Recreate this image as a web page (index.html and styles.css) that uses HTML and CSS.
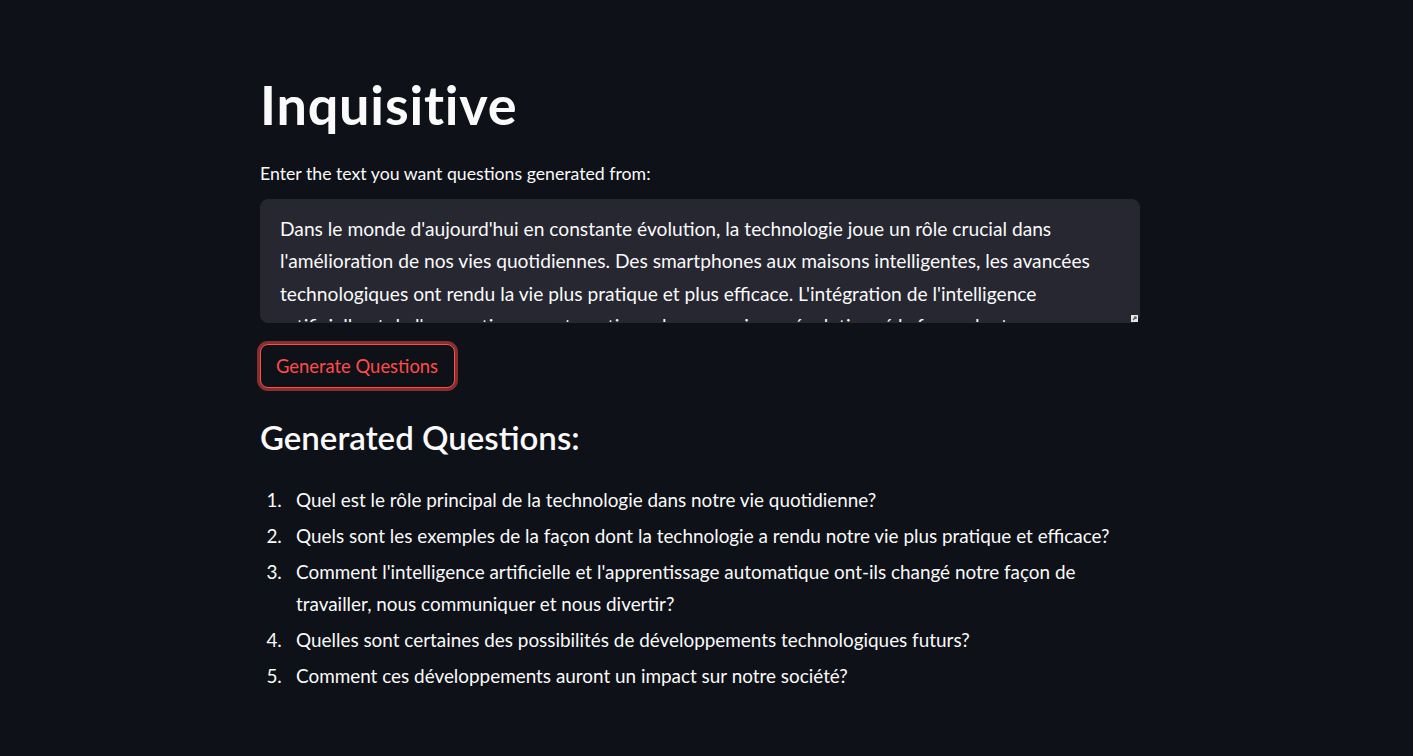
FILE: index.html
```html
<!DOCTYPE html>
<html lang="fr">
<head>
<meta charset="utf-8">
<title>Inquisitive</title>
<link rel="stylesheet" href="styles.css">
</head>
<body>
<div class="app">
  <main class="block">
    <h1 class="title">Inquisitive</h1>
    <label class="field-label" for="source">Enter the text you want questions generated from:</label>
    <div class="textarea-wrap">
      <textarea id="source" class="textarea">Dans le monde d'aujourd'hui en constante évolution, la technologie joue un rôle crucial dans l'amélioration de nos vies quotidiennes. Des smartphones aux maisons intelligentes, les avancées technologiques ont rendu la vie plus pratique et plus efficace. L'intégration de l'intelligence artificielle et de l'apprentissage automatique dans nos vies a révolutionné la façon dont nous travaillons, communiquons et nous divertissons. À l'avenir, de nombreuses possibilités de développements technologiques s'offrent à nous, et ces développements auront un impact important sur notre société.</textarea>
      <span class="resizer" aria-hidden="true"><svg viewBox="0 0 7 7" width="7" height="7"><path d="M2 5 L5 2 M3 2 H5 V4" fill="none" stroke="#555" stroke-width="1.2"/></svg></span>
    </div>
    <button class="btn" type="button">Generate Questions</button>
    <h3 class="subhead">Generated Questions:</h3>
    <ol class="questions">
      <li>Quel est le rôle principal de la technologie dans notre vie quotidienne?</li>
      <li>Quels sont les exemples de la façon dont la technologie a rendu notre vie plus pratique et efficace?</li>
      <li>Comment l'intelligence artificielle et l'apprentissage automatique ont-ils changé notre façon de travailler, nous communiquer et nous divertir?</li>
      <li>Quelles sont certaines des possibilités de développements technologiques futurs?</li>
      <li>Comment ces développements auront un impact sur notre société?</li>
    </ol>
  </main>
</div>
</body>
</html>
```
FILE: styles.css
```css
html, body {
  margin: 0;
  padding: 0;
  background: #0e1117;
}

body {
  color: #fafafa;
  font-family: "Lato", "Liberation Sans", sans-serif;
  overflow: hidden;
}

.app {
  padding-right: 13px;
  min-height: 756px;
}

.block {
  max-width: 880px;
  margin: 0 auto;
  padding-top: 73px;
  display: flex;
  flex-direction: column;
  align-items: flex-start;
}

.title {
  margin: 0;
  font-size: 54px;
  line-height: 64.8px;
  font-weight: 700;
  letter-spacing: 0.8px;
  color: #fafafa;
}

.field-label {
  margin-top: 22.6px;
  font-size: 17.7px;
  line-height: 28px;
  font-weight: 400;
  color: #fafafa;
}

.textarea-wrap {
  position: relative;
  margin-top: 10.6px;
  width: 100%;
  height: 124px;
}

.textarea {
  display: block;
  box-sizing: border-box;
  width: 100%;
  height: 124px;
  margin: 0;
  padding: 13px 19px;
  background: #262730;
  border: 1px solid #262730;
  border-radius: 8px;
  color: #fafafa;
  font-family: "Lato", "Liberation Sans", sans-serif;
  font-size: 19.2px;
  line-height: 32.5px;
  resize: none;
  overflow: hidden;
  outline: none;
}

.resizer {
  position: absolute;
  right: 2px;
  bottom: 1px;
  width: 7px;
  height: 7px;
  background: #e6e6e6;
  display: block;
}

.resizer svg {
  display: block;
}

.btn {
  margin-top: 21px;
  padding: 5px 16px 5px 15px;
  background: #0e1117;
  border: 1px solid #ff4b4b;
  border-radius: 8px;
  box-shadow: 0 0 0 3px rgba(255, 75, 75, 0.5);
  color: #ff4b4b;
  font-family: "Lato", "Liberation Sans", sans-serif;
  font-size: 18.4px;
  line-height: 32px;
  cursor: pointer;
}

.subhead {
  margin: 30.4px 0 0;
  font-size: 33px;
  line-height: 39.6px;
  font-weight: 600;
  color: #fafafa;
}

.questions {
  margin: 25.8px 0 0;
  padding-left: 36px;
}

.questions li {
  font-size: 18.9px;
  line-height: 32px;
  margin-bottom: 4px;
}

.questions li::marker {
  content: counter(list-item) ".\2003";
}
```
